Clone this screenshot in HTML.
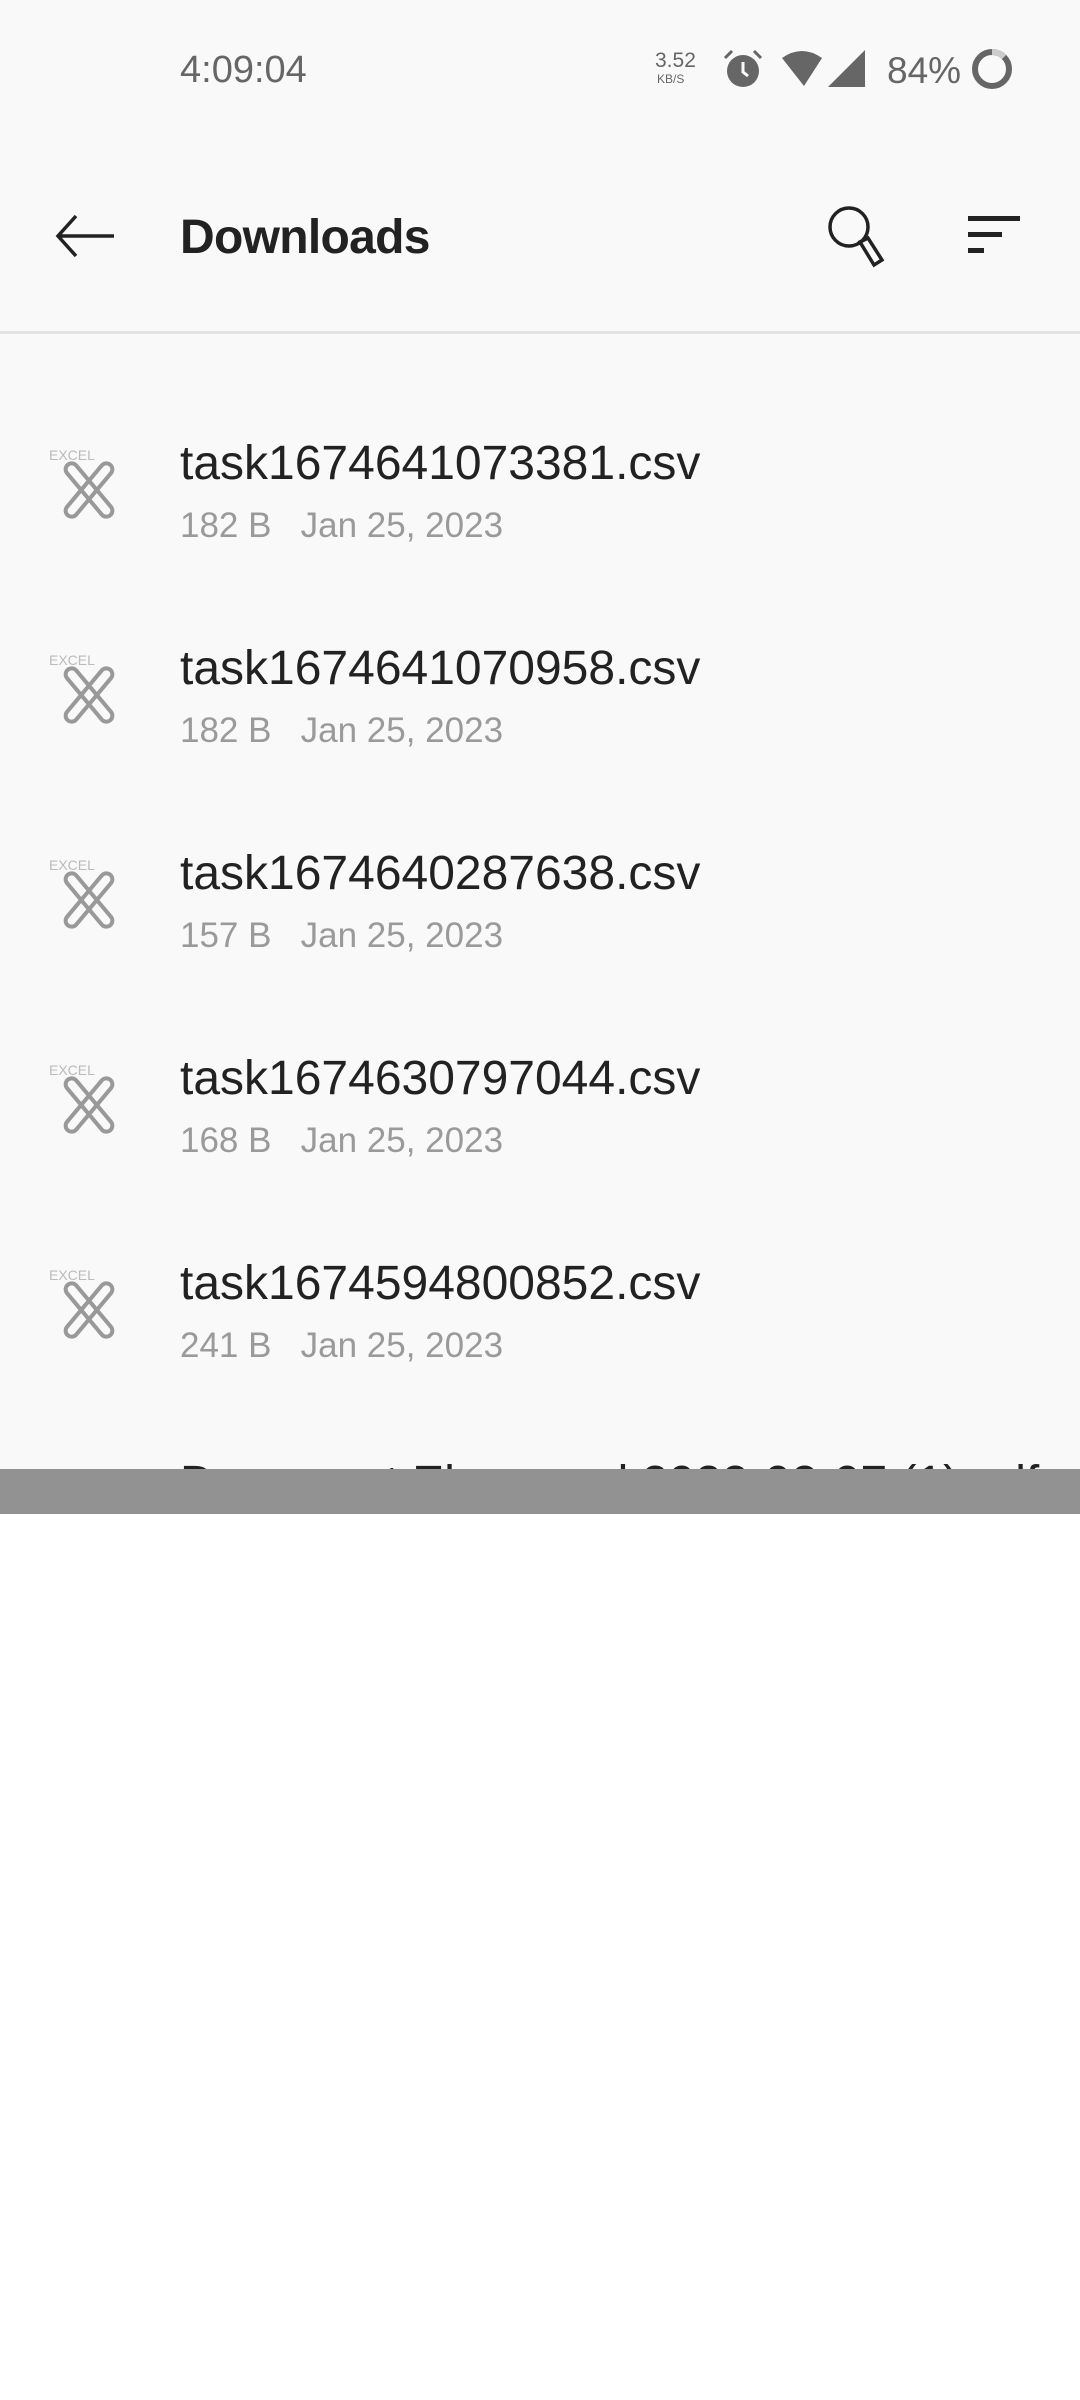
<!DOCTYPE html>
<html><head><meta charset="utf-8"><style>
*{margin:0;padding:0;box-sizing:border-box}
body{width:1080px;height:2400px;background:#fff;font-family:"Liberation Sans",sans-serif;position:relative;overflow:hidden}
.top{position:absolute;left:0;top:0;width:1080px;height:1469px;background:#f9f9f9;overflow:hidden}
.abs{position:absolute}
.div{position:absolute;left:0;top:331px;width:1080px;height:3px;background:#e3e3e3}
.name{position:absolute;left:180px;font-size:48px;color:#222;white-space:nowrap;line-height:1}
.meta{position:absolute;left:180px;font-size:35px;color:#9a9a9a;white-space:nowrap;line-height:1}
.ex{position:absolute;left:49px;font-size:14px;color:#bbb;line-height:1}
.bar{position:absolute;left:0;top:1469px;width:1080px;height:45px;background:#929292}
</style></head><body>
<div class="top">
<div class="abs" style="left:180px;top:49px;font-size:38px;color:#666">4:09:04</div>
<div class="abs" style="left:655px;top:50px;font-size:21px;color:#666;line-height:1">3.52</div>
<div class="abs" style="left:657px;top:73px;font-size:12px;color:#666;line-height:1">KB/S</div>
<svg class="abs" style="left:722px;top:48px" width="42" height="42" viewBox="0 0 42 42"><circle cx="21" cy="23" r="16" fill="#666"/><path d="M3 10 L10 3 M39 10 L32 3" stroke="#666" stroke-width="3"/><path d="M21 14 V24 L26 28" stroke="#f9f9f9" stroke-width="3" fill="none"/></svg>
<svg class="abs" style="left:780px;top:50px" width="44" height="38" viewBox="0 0 44 38"><path d="M2 8 Q22 -6 42 8 L24 36 Z" fill="#666"/></svg>
<svg class="abs" style="left:828px;top:50px" width="38" height="38"><path d="M37 0 V37 H0 Z" fill="#666"/></svg>
<div class="abs" style="left:887px;top:50px;font-size:37px;color:#666">84%</div>
<svg class="abs" style="left:970px;top:47px" width="44" height="44"><circle cx="22" cy="22" r="17" fill="none" stroke="#666" stroke-width="6"/><path d="M22 5 A17 17 0 0 1 34 10" stroke="#ccc" stroke-width="6" fill="none"/></svg>

<svg class="abs" style="left:54px;top:212px" width="64" height="48"><path d="M60 24 H4 M22 4 L4 24 L22 44" stroke="#222" stroke-width="3.5" fill="none"/></svg>
<div class="abs" style="left:180px;top:210px;font-size:48px;color:#222;font-weight:bold;letter-spacing:-0.7px">Downloads</div>
<svg class="abs" style="left:824px;top:202px" width="72" height="66"><circle cx="25" cy="25" r="19" fill="none" stroke="#222" stroke-width="3.5"/><path d="M36 40 L44 36 L58 58 L50 63 Z" fill="none" stroke="#222" stroke-width="3.5"/></svg>
<svg class="abs" style="left:966px;top:216px" width="58" height="40"><rect x="2" y="0" width="52" height="5" fill="#222"/><rect x="2" y="16" width="34" height="5" fill="#222"/><rect x="2" y="32" width="16" height="5" fill="#222"/></svg>
<div class="div"></div>

<div class="ex" style="top:448px">EXCEL</div>
<svg class="abs" style="left:61px;top:461px" width="58" height="60" viewBox="0 0 58 60"><g fill="none" stroke="#999" stroke-width="4"><rect x="22" y="-4" width="12" height="66" rx="6" transform="rotate(-40 28 29)"/><rect x="22" y="-4" width="12" height="66" rx="6" transform="rotate(40 28 29)"/></g></svg>
<div class="name" style="top:440px">task1674641073381.csv</div>
<div class="meta" style="top:508px">182 B&nbsp;&nbsp; Jan 25, 2023</div>

<div class="ex" style="top:653px">EXCEL</div>
<svg class="abs" style="left:61px;top:666px" width="58" height="60" viewBox="0 0 58 60"><g fill="none" stroke="#999" stroke-width="4"><rect x="22" y="-4" width="12" height="66" rx="6" transform="rotate(-40 28 29)"/><rect x="22" y="-4" width="12" height="66" rx="6" transform="rotate(40 28 29)"/></g></svg>
<div class="name" style="top:645px">task1674641070958.csv</div>
<div class="meta" style="top:713px">182 B&nbsp;&nbsp; Jan 25, 2023</div>

<div class="ex" style="top:858px">EXCEL</div>
<svg class="abs" style="left:61px;top:871px" width="58" height="60" viewBox="0 0 58 60"><g fill="none" stroke="#999" stroke-width="4"><rect x="22" y="-4" width="12" height="66" rx="6" transform="rotate(-40 28 29)"/><rect x="22" y="-4" width="12" height="66" rx="6" transform="rotate(40 28 29)"/></g></svg>
<div class="name" style="top:850px">task1674640287638.csv</div>
<div class="meta" style="top:918px">157 B&nbsp;&nbsp; Jan 25, 2023</div>

<div class="ex" style="top:1063px">EXCEL</div>
<svg class="abs" style="left:61px;top:1076px" width="58" height="60" viewBox="0 0 58 60"><g fill="none" stroke="#999" stroke-width="4"><rect x="22" y="-4" width="12" height="66" rx="6" transform="rotate(-40 28 29)"/><rect x="22" y="-4" width="12" height="66" rx="6" transform="rotate(40 28 29)"/></g></svg>
<div class="name" style="top:1055px">task1674630797044.csv</div>
<div class="meta" style="top:1123px">168 B&nbsp;&nbsp; Jan 25, 2023</div>

<div class="ex" style="top:1268px">EXCEL</div>
<svg class="abs" style="left:61px;top:1281px" width="58" height="60" viewBox="0 0 58 60"><g fill="none" stroke="#999" stroke-width="4"><rect x="22" y="-4" width="12" height="66" rx="6" transform="rotate(-40 28 29)"/><rect x="22" y="-4" width="12" height="66" rx="6" transform="rotate(40 28 29)"/></g></svg>
<div class="name" style="top:1260px">task1674594800852.csv</div>
<div class="meta" style="top:1328px">241 B&nbsp;&nbsp; Jan 25, 2023</div>

<div class="name" style="top:1460px">Document Ehnanced 2022-02-07 (1).pdf</div>
</div>
<div class="bar"></div>
</body></html>
